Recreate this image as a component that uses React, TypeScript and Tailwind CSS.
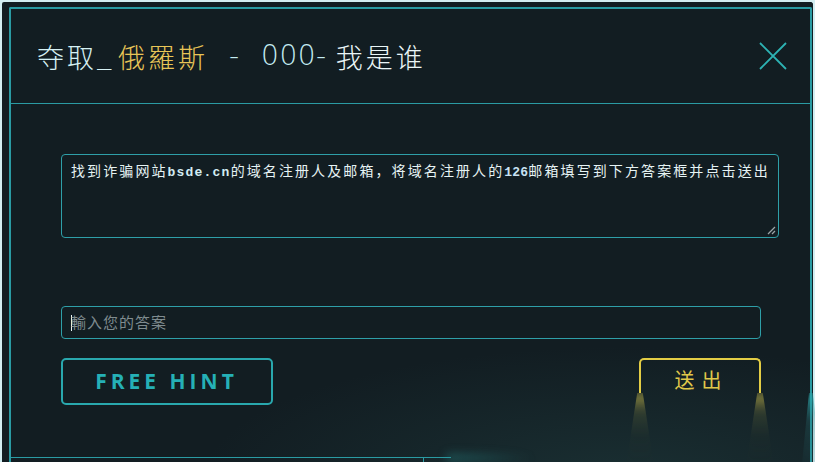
import React from "react";

const cjk = "font-['Noto_Sans_CJK_SC',sans-serif]";

export default function App() {
  return (
    <div className="w-[815px] h-[462px] overflow-hidden bg-[#d3eef2]">
      <div className="relative w-full h-full bg-[#121d22] border-2 border-b-0 border-[#d3eef2] rounded-t-[4px] pt-[5px] pl-[7px] pr-px">
        {/* bottom ambient glow */}
        <div className="pointer-events-none absolute inset-0 bg-[radial-gradient(ellipse_420px_130px_at_620px_475px,rgba(40,80,80,0.35),rgba(0,0,0,0))]" />
        <div className="relative h-full border-2 border-b-0 border-[#2a9ba3] rounded-t-[2px] flex flex-col">
          {/* header */}
          <div className="h-[95px] shrink-0 flex items-center justify-between pl-[26px] pr-[23px] border-b border-[#2a9ba3]">
            <div className="flex items-center text-[27px] leading-none whitespace-pre">
              <span className={`text-[#d6f1f4] tracking-[3px] font-light ${cjk}`}>夺取</span>
              <span className="text-[#d6f1f4] font-['DejaVu_Sans_Mono',monospace] font-light text-[24px] w-[21px]">_</span>
              <span className={`text-[#e8c557] tracking-[3px] font-light ${cjk}`}>俄羅斯</span>
              <span className="text-[#c4ecf2] font-['DejaVu_Sans',sans-serif] font-extralight text-[28px] pl-[21px]">-</span>
              <span className="text-[#c4ecf2] font-['DejaVu_Sans',sans-serif] font-extralight text-[28px] tracking-[0.5px] pl-[22px]">000-</span>
              <span className={`text-[#eaf6f7] tracking-[3px] font-light pl-[9px] ${cjk}`}>我是谁</span>
            </div>
            <svg width="28" height="28" viewBox="0 0 28 28" className="shrink-0">
              <path d="M1 1 L27 27 M27 1 L1 27" stroke="#2db3b4" strokeWidth="1.8" fill="none" />
            </svg>
          </div>

          {/* body */}
          <div className="flex-1 flex flex-col pl-[50px] pt-[50px]">
            <div className={`relative w-[718px] h-[84px] border border-[#2e9fa8] rounded-[4px] pl-[9px] pt-[5px] text-[14px] leading-[20px] tracking-[2.1px] text-[#e6f3f4] whitespace-nowrap ${cjk}`}>
              找到诈骗网站<span className="font-['Liberation_Mono',monospace] text-[13px] tracking-[1.2px] font-bold text-[#d2ecf2]">bsde.cn</span>的域名注册人及邮箱，将域名注册人的<span className="font-['Liberation_Mono',monospace] text-[13px] tracking-[0.2px] font-bold text-[#c8e2f2]">126</span>邮箱填写到下方答案框并点击送出
              <svg width="9" height="9" viewBox="0 0 9 9" className="absolute right-[2px] bottom-[2px]">
                <path d="M8 1 L1 8 M8 5 L5 8" stroke="#9aa4a8" strokeWidth="1.3" />
              </svg>
            </div>

            <div className="mt-[68px] w-[700px] h-[33px] border border-[#2e9fa8] rounded-[4px] flex items-center pl-[9px]">
              <span className="w-px h-[16px] bg-[#e6f3f4] mr-[-1px]" />
              <span className={`text-[15px] tracking-[1px] text-[#7f8b8f] ${cjk}`}>輸入您的答案</span>
            </div>

            <div className="mt-[19px] w-[700px] flex justify-between items-start">
              <div className="w-[212px] h-[47px] border-2 border-[#29a8ae] rounded-[5px] flex items-center justify-center">
                <span className="text-[21px] font-bold tracking-[4px] text-[#25b0b6] font-['Open_Sans',sans-serif] pr-[1px]">FREE HINT</span>
              </div>
              <div className="relative w-[122px] h-[35px] border-2 border-b-0 border-[#e3cd45] rounded-t-[5px] flex items-start justify-center pt-[9px]">
                <span className={`text-[20px] leading-[22px] tracking-[7px] pl-[3px] text-[#e0c84a] ${cjk}`}>送出</span>
                <div className="absolute top-full left-[-15px] w-[28px] h-[72px] blur-[4px] bg-[linear-gradient(to_bottom,rgba(230,210,80,0.6),rgba(140,140,70,0.22)_25%,rgba(60,70,50,0.1)_60%,rgba(40,50,45,0.04))] [clip-path:polygon(40%_0,60%_0,100%_100%,0_100%)]" />
                <div className="absolute top-full right-[-15px] w-[28px] h-[72px] blur-[4px] bg-[linear-gradient(to_bottom,rgba(230,210,80,0.6),rgba(140,140,70,0.22)_25%,rgba(60,70,50,0.1)_60%,rgba(40,50,45,0.04))] [clip-path:polygon(40%_0,60%_0,100%_100%,0_100%)]" />
              </div>
            </div>
          </div>

          {/* bottom line */}
          <div className="relative h-[5px] shrink-0">
            <div className="absolute left-0 top-0 w-[440px] h-px bg-[#2a9ba3]" />
            <div className="absolute left-[435px] top-[-6px] w-[90px] h-[14px] blur-[4px] bg-[radial-gradient(ellipse_at_left,rgba(40,140,140,0.5),rgba(0,0,0,0)_70%)]" />
            <div className="absolute left-[412px] top-0 w-px h-[5px] bg-[#2a9ba3]" />
          </div>
          {/* right edge glow */}
          <div className="absolute right-[-11px] top-[384px] w-[20px] h-[80px] blur-[3px] bg-[linear-gradient(to_bottom,rgba(45,170,175,0.75),rgba(40,110,115,0.28)_35%,rgba(30,70,75,0.1))] [clip-path:polygon(40%_0,60%_0,100%_100%,0_100%)]" />
        </div>
      </div>
    </div>
  );
}
